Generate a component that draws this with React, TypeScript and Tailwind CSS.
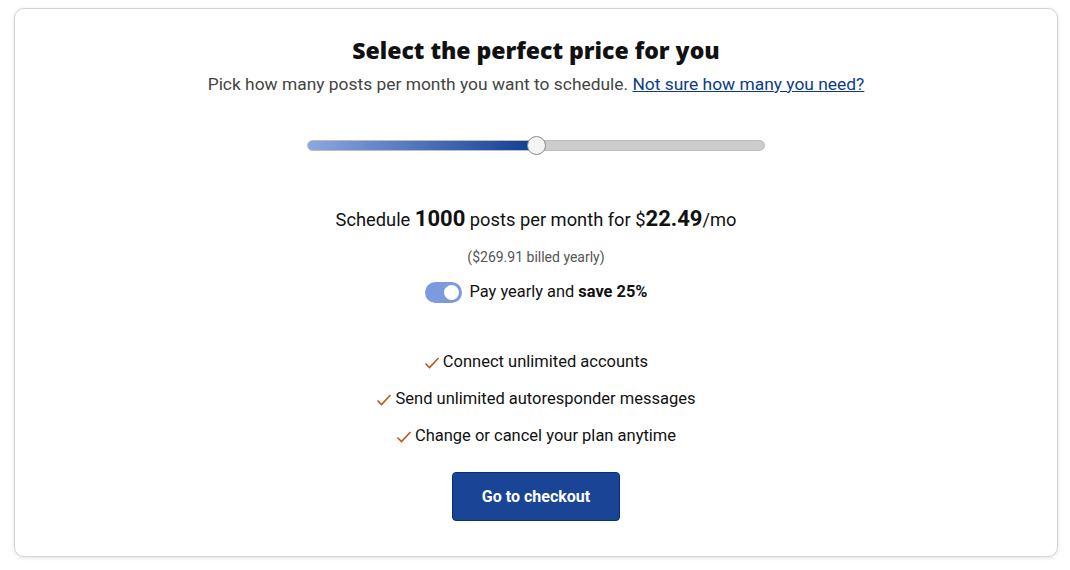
import React from "react";

const features = [
  "Connect unlimited accounts",
  "Send unlimited autoresponder messages",
  "Change or cancel your plan anytime",
];

function Check() {
  return (
    <svg width="16" height="14" viewBox="0 0 16 14" className="mr-[3px] mt-[1px]">
      <path d="M1.5 7.5 L5.5 11.5 L14.5 2" fill="none" stroke="#c8501a" strokeWidth="1.6" />
    </svg>
  );
}

export default function App() {
  return (
    <div className="h-[570px] w-[1070px] bg-white pt-[8px] pl-[14px] font-['Roboto',sans-serif]">
      <div className="h-[549px] w-[1044px] rounded-[10px] border border-[#d4d4d4] bg-white shadow-[0_1px_4px_rgba(0,0,0,0.12)]">
        <div className="flex flex-col items-center">
          <h1 className="mt-[25px] font-['Open_Sans',sans-serif] text-[23px] font-extrabold leading-[32px] text-[#111]">
            Select the perfect price for you
          </h1>
          <p className="mt-[6px] text-[17.4px] leading-[24px] text-[#444]">
            Pick how many posts per month you want to schedule.{" "}
            <a href="#" className="text-[#0b3a8c] underline">
              Not sure how many you need?
            </a>
          </p>

          {/* slider */}
          <div className="relative mt-[44px] h-[11px] w-[458px] rounded-full border border-[#bdbdbd] bg-[#cccccc]">
            <div className="h-full w-[229px] rounded-l-full bg-gradient-to-r from-[#8da6e2] to-[#0c3d93]" />
            <div className="absolute top-[-5px] left-[219px] h-[19px] w-[19px] rounded-full border border-[#8a8a8a] bg-[#f4f4f4]" />
          </div>

          <p className="mt-[54px] text-[18.3px] leading-[28px] text-[#111]">
            Schedule <span className="text-[22px] font-bold">1000</span> posts per month for $
            <span className="text-[22px] font-bold">22.49</span>/mo
          </p>
          <p className="mt-[13px] text-[14px] leading-[20px] text-[#555]">($269.91 billed yearly)</p>

          <div className="mt-[14px] flex items-center">
            <div className="flex h-[21px] w-[37px] items-center justify-end rounded-full bg-[#7e9ade] pr-[1px]">
              <div className="h-[19px] w-[19px] rounded-full border-2 border-[#7e9ade] bg-white" />
            </div>
            <span className="ml-[8px] text-[16.4px] leading-[22px] text-[#111]">
              Pay yearly and <span className="font-bold">save 25%</span>
            </span>
          </div>

          <ul className="mt-[48px] flex flex-col items-center gap-[15px]">
            {features.map((f) => (
              <li key={f} className="flex items-center text-[16.5px] leading-[22px] text-[#111]">
                <Check />
                {f}
              </li>
            ))}
          </ul>

          <button className="mt-[25px] h-[49px] w-[168px] rounded-[4px] border border-[#0c2f70] bg-[#1a4597] text-[16px] font-bold text-white">
            Go to checkout
          </button>
        </div>
      </div>
    </div>
  );
}
